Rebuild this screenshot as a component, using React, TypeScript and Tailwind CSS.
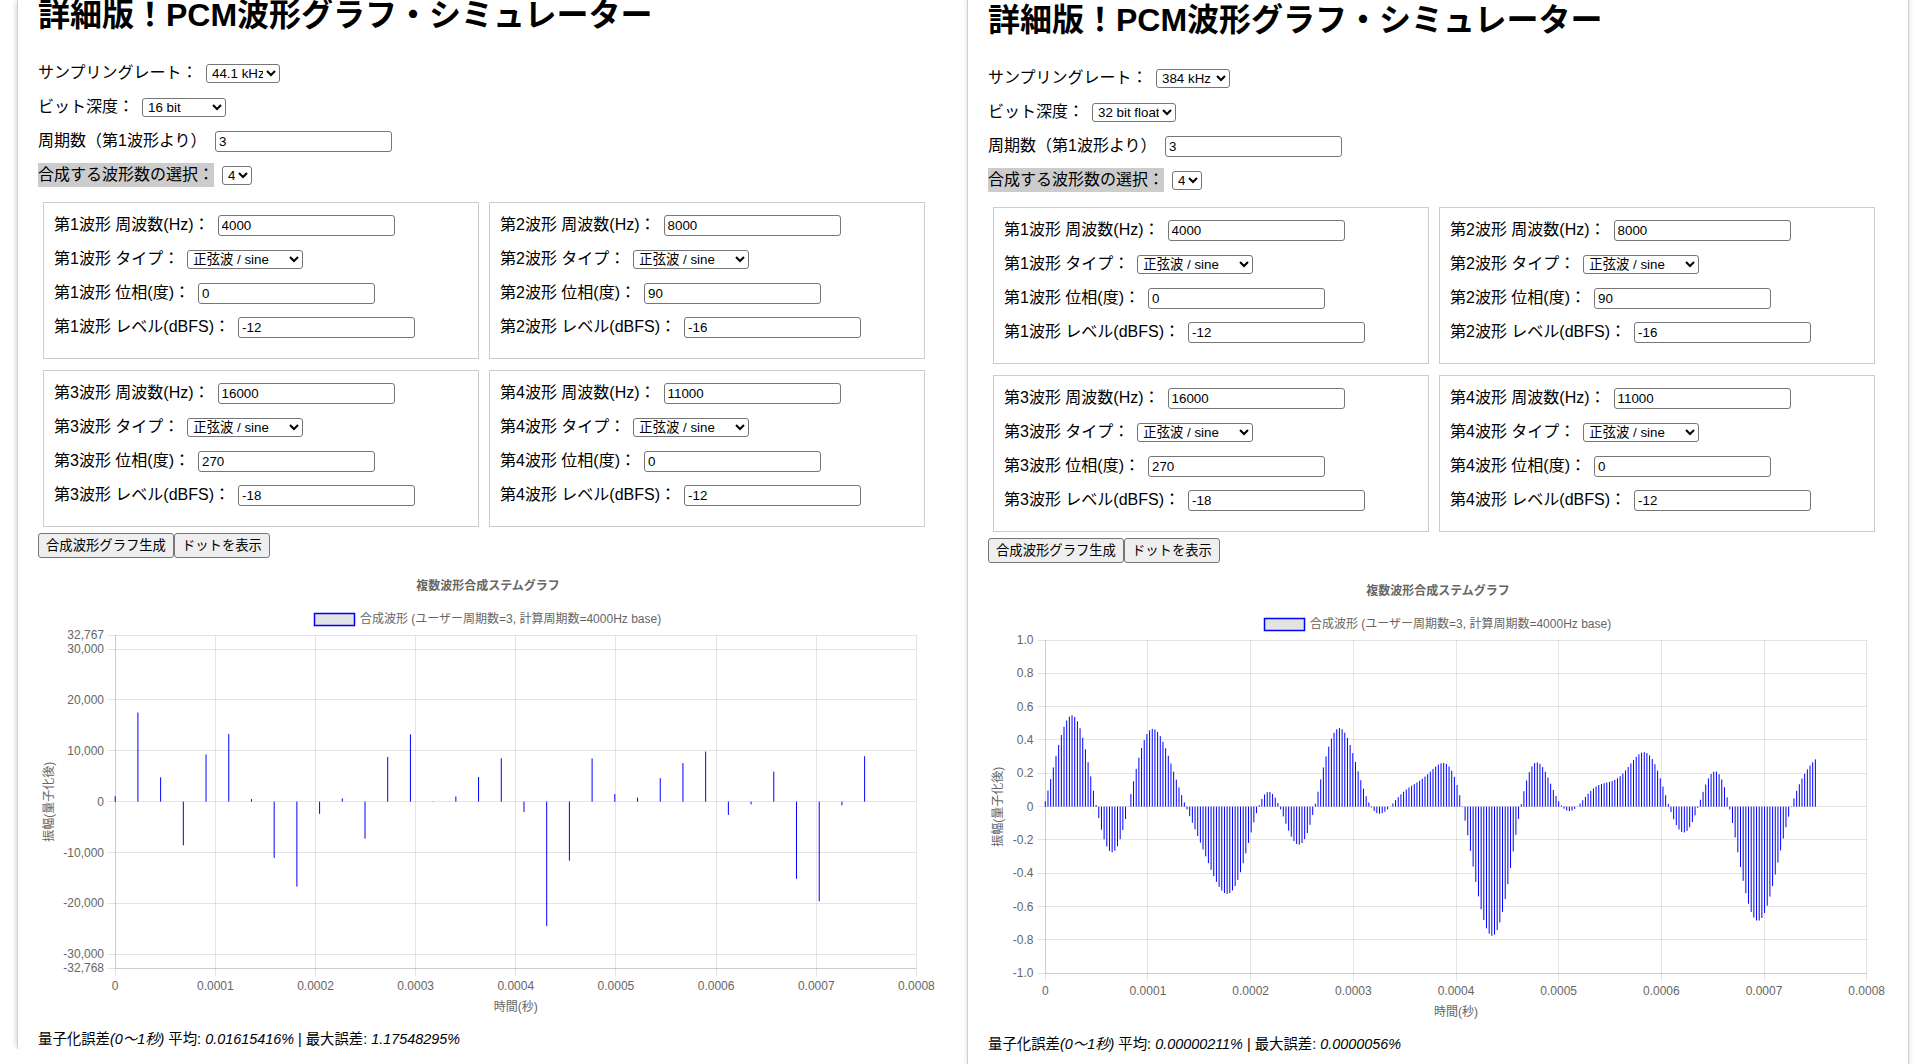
const WAVES = [
  { freq: 4000, type: "正弦波 / sine", phase: 0, level: -12 },
  { freq: 8000, type: "正弦波 / sine", phase: 90, level: -16 },
  { freq: 16000, type: "正弦波 / sine", phase: 270, level: -18 },
  { freq: 11000, type: "正弦波 / sine", phase: 0, level: -12 },
];

const X_TICKS = ["0", "0.0001", "0.0002", "0.0003", "0.0004", "0.0005", "0.0006", "0.0007", "0.0008"];
const PLOT_TOP = 70;
const PLOT_BOTTOM = 403.3;
const GRID = "rgba(0,0,0,0.1)";

// composite signal, same formula the simulator uses
function sampleAt(t: number) {
  return WAVES.reduce(
    (sum, w) => sum + Math.pow(10, w.level / 20) * Math.sin(2 * Math.PI * w.freq * t + (w.phase * Math.PI) / 180),
    0
  );
}

function makeSamples(rate: number, quantize: boolean) {
  const count = Math.floor(0.00075 * rate + 1e-6);
  const out: { t: number; v: number }[] = [];
  for (let i = 0; i <= count; i++) {
    const t = i / rate;
    const v = sampleAt(t);
    out.push({ t, v: quantize ? Math.round(v * 32767) : v });
  }
  return out;
}

function Chart({
  rate,
  quantize,
  yMin,
  yMax,
  yTicks,
  formatY,
  left,
  right,
  center,
  labelRight,
  yTitleX,
}: {
  rate: number;
  quantize: boolean;
  yMin: number;
  yMax: number;
  yTicks: number[];
  formatY: (v: number) => string;
  left: number;
  right: number;
  center: number;
  labelRight: number;
  yTitleX: number;
}) {
  const samples = makeSamples(rate, quantize);
  const toX = (t: number) => left + (t / 0.0008) * (right - left);
  const toY = (v: number) => PLOT_TOP + ((yMax - v) / (yMax - yMin)) * (PLOT_BOTTOM - PLOT_TOP);
  const align = (p: number) => Math.floor(p) + 0.5;
  const zero = toY(0);

  return (
    <svg width="900" height="455" className="block" fontSize="12" fill="#666">
      <text x={center} y="20.7" textAnchor="middle" dominantBaseline="central" fontWeight="bold">
        複数波形合成ステムグラフ
      </text>
      <rect x={center - 173.5} y="48.5" width="40" height="12" fill="#e3e3e3" stroke="#00f" strokeWidth="1.5" />
      <text x={center - 128} y="54" dominantBaseline="central">
        合成波形 (ユーザー周期数=3, 計算周期数=4000Hz base)
      </text>

      {/* grid */}
      {yTicks.map((v) => (
        <line key={v} x1={left - 8} x2={right} y1={align(toY(v))} y2={align(toY(v))} stroke={GRID} />
      ))}
      {X_TICKS.map((label, i) => {
        const x = align(left + (i / 8) * (right - left));
        return <line key={label} x1={x} x2={x} y1={PLOT_TOP} y2={PLOT_BOTTOM + 8} stroke={GRID} />;
      })}
      <line x1={align(left)} x2={align(left)} y1={PLOT_TOP} y2={PLOT_BOTTOM} stroke={GRID} />
      <line x1={left} x2={right} y1={align(PLOT_BOTTOM)} y2={align(PLOT_BOTTOM)} stroke={GRID} />

      {/* stems */}
      {samples.map((s) => {
        const y = toY(s.v);
        return (
          <rect
            key={s.t}
            x={toX(s.t) - 0.5}
            y={Math.min(y, zero)}
            width="1"
            height={Math.abs(y - zero)}
            fill="#00f"
          />
        );
      })}

      {/* axis labels */}
      {yTicks.map((v) => (
        <text key={v} x={labelRight} y={toY(v)} textAnchor="end" dominantBaseline="central">
          {formatY(v)}
        </text>
      ))}
      {X_TICKS.map((label, i) => (
        <text
          key={label}
          x={left + (i / 8) * (right - left)}
          y="420.7"
          textAnchor="middle"
          dominantBaseline="central"
        >
          {label}
        </text>
      ))}
      <text x={(left + right) / 2} y="441.7" textAnchor="middle" dominantBaseline="central">
        時間(秒)
      </text>
      <text
        x={yTitleX}
        y={zero}
        textAnchor="middle"
        dominantBaseline="central"
        transform={`rotate(-90 ${yTitleX} ${zero})`}
      >
        振幅(量子化後)
      </text>
    </svg>
  );
}

function NumberInput({ value }: { value: string | number }) {
  return (
    <input
      readOnly
      value={value}
      className="h-[21px] w-[177px] rounded-[3px] border border-[#767676] bg-white px-[3px] text-[13.33px] text-black"
    />
  );
}

function Select({ value, className }: { value: string; className: string }) {
  return (
    <select
      value={value}
      onChange={() => {}}
      className={`h-[19px] rounded-[3px] border border-[#767676] bg-white pl-px text-[13.33px] text-black ${className}`}
    >
      <option>{value}</option>
    </select>
  );
}

function WaveBox({ index }: { index: number }) {
  const wave = WAVES[index];
  const name = `第${index + 1}波形`;
  return (
    <div className="h-[157px] border border-[#ccc] p-[10px]">
      <div className="mb-[10px] flex h-6 items-center gap-2">
        <span>{name} 周波数(Hz)：</span>
        <NumberInput value={wave.freq} />
      </div>
      <div className="mb-[10px] flex h-6 items-center gap-2">
        <span>{name} タイプ：</span>
        <Select value={wave.type} className="w-[116px]" />
      </div>
      <div className="mb-[10px] flex h-6 items-center gap-2">
        <span>{name} 位相(度)：</span>
        <NumberInput value={wave.phase} />
      </div>
      <div className="flex h-6 items-center gap-2">
        <span>{name} レベル(dBFS)：</span>
        <NumberInput value={wave.level} />
      </div>
    </div>
  );
}

function Simulator({
  rate,
  bits,
  average,
  max,
  chart,
}: {
  rate: string;
  bits: string;
  average: string;
  max: string;
  chart: React.ReactNode;
}) {
  return (
    <div className="px-5">
      <h1 className="mt-[2px] mb-[27px] h-[37px] text-[32px] leading-[37px] font-bold whitespace-nowrap text-black">
        詳細版！PCM波形グラフ・シミュレーター
      </h1>

      <div className="mb-[10px] flex h-6 items-center gap-[8.5px]">
        <span>サンプリングレート：</span>
        <Select value={rate} className="w-[74px]" />
      </div>
      <div className="mb-[10px] flex h-6 items-center gap-2">
        <span>ビット深度：</span>
        <Select value={bits} className="w-[83.5px]" />
      </div>
      <div className="mb-[10px] flex h-6 items-center gap-[8.5px]">
        <span>周期数（第1波形より）</span>
        <NumberInput value="3" />
      </div>
      <div className="flex h-6 items-center gap-2">
        <span className="bg-[#ccc]">合成する波形数の選択：</span>
        <Select value="4" className="w-[29.5px]" />
      </div>

      <div className="mx-[5px] mt-[15px] mb-[6px] grid grid-cols-[436px_436px] gap-x-[10px] gap-y-[11px]">
        {WAVES.map((w, i) => (
          <WaveBox key={w.freq} index={i} />
        ))}
      </div>

      <div className="flex h-[25px]">
        <button className="rounded-[3px] border border-[#767676] bg-[#efefef] px-[7px] text-[13.33px] text-black">
          合成波形グラフ生成
        </button>
        <button className="rounded-[3px] border border-[#767676] bg-[#efefef] px-[7px] text-[13.33px] text-black">
          ドットを表示
        </button>
      </div>

      <div className="mt-[7px]">{chart}</div>

      <p className="mt-[9px] text-[14.4px] leading-5 whitespace-nowrap">
        量子化誤差<em>(0〜1秒)</em> 平均: <em>{average}</em> | 最大誤差: <em>{max}</em>
      </p>
    </div>
  );
}

export default function App() {
  return (
    <div className="flex h-[1064px] overflow-hidden bg-white pl-[17px] font-['Liberation_Sans','Noto_Sans_CJK_JP',sans-serif] text-base text-black">
      <div className="h-[1049px] w-[941px] shrink-0 overflow-hidden border-l border-[#d0d0d0] shadow-[-4px_0_4px_-2px_rgba(0,0,0,0.12)]">
        <div className="-mt-[5px]">
          <Simulator
            rate="44.1 kHz"
            bits="16 bit"
            average="0.01615416%"
            max="1.17548295%"
            chart={
              <Chart
                rate={44100}
                quantize
                yMin={-32768}
                yMax={32767}
                yTicks={[32767, 30000, 20000, 10000, 0, -10000, -20000, -30000, -32768]}
                formatY={(v) => v.toLocaleString("en-US")}
                left={77.2}
                right={878.4}
                center={450}
                labelRight={66}
                yTitleX={11.5}
              />
            }
          />
        </div>
      </div>
      <div className="ml-[9px] h-[1064px] w-[942px] shrink-0 overflow-hidden border-x border-[#d0d0d0] shadow-[0_0_5px_rgba(0,0,0,0.15)]">
        <Simulator
          rate="384 kHz"
          bits="32 bit float"
          average="0.00000211%"
          max="0.0000056%"
          chart={
            <Chart
              rate={384000}
              quantize={false}
              yMin={-1}
              yMax={1}
              yTicks={[1, 0.8, 0.6, 0.4, 0.2, 0, -0.2, -0.4, -0.6, -0.8, -1]}
              formatY={(v) => (v === 0 ? "0" : v.toFixed(1))}
              left={57.3}
              right={878.7}
              center={450}
              labelRight={45.5}
              yTitleX={10.5}
            />
          }
        />
      </div>
    </div>
  );
}
